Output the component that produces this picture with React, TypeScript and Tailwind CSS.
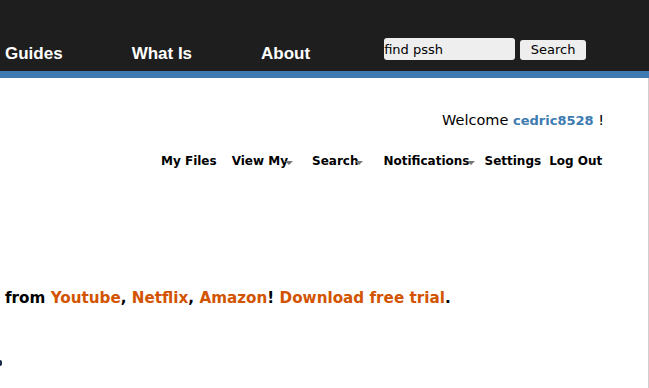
import React from 'react';

const navFont = { fontFamily: '"Liberation Sans", Arial, sans-serif' };
const bodyFont = { fontFamily: '"DejaVu Sans", Verdana, sans-serif' };

const Caret = () => (
  <span className="ml-[-3px] mt-[4px] inline-block h-0 w-0 border-x-[4px] border-t-[4px] border-x-transparent border-t-[#777]" />
);

const MenuItem: React.FC<{ label: string; caret?: boolean; className?: string }> = ({ label, caret, className }) => (
  <span className={`flex items-center text-[12px] font-bold text-black ${className ?? ''}`}>
    {label}
    {caret && <Caret />}
  </span>
);

export default function App() {
  return (
    <div className="h-[388px] w-[649px] overflow-hidden bg-white" style={bodyFont}>
      <header className="flex h-[71px] bg-[#1e1e1e]">
        <nav className="flex gap-[69px] self-end pb-[5px] pl-[5px] text-[17px] font-bold text-white" style={navFont}>
          <span>Guides</span>
          <span>What Is</span>
          <span>About</span>
        </nav>
        <div className="ml-[74px] mt-[38px] flex h-[22px] items-center gap-[5px]">
          <input
            readOnly
            value="find pssh"
            className="h-[22px] w-[131px] rounded-[3px] bg-[#eeeeee] px-0 text-[13px] text-black outline-none"
            style={bodyFont}
          />
          <button
            className="mt-[2px] h-[20px] w-[66px] rounded-[3px] bg-[#eeeeee] text-[13px] text-black"
            style={bodyFont}
          >
            Search
          </button>
        </div>
      </header>
      <div className="h-[7px] bg-[#3d7bb0]" />
      <main className="h-[310px] border-r border-[#cfcfcf]">
        <div className="flex justify-end pr-[44px] pt-[32px] text-[14.5px] text-black">
          <span>
            Welcome <span className="text-[13px] font-bold text-[#3d7bb0]">cedric8528</span> !
          </span>
        </div>
        <div className="mt-[20px] flex items-center pl-[161px]">
          <MenuItem label="My Files" />
          <MenuItem label="View My" caret className="ml-[15px]" />
          <MenuItem label="Search" caret className="ml-[19px]" />
          <MenuItem label="Notifications" caret className="ml-[20px]" />
          <MenuItem label="Settings" className="ml-[10px]" />
          <MenuItem label="Log Out" className="ml-[8px]" />
        </div>
        <p className="mt-[117px] pl-[5px] text-[15.2px] font-bold text-black">
          from <span className="text-[#d35400]">Youtube</span>, <span className="text-[#d35400]">Netflix</span>,{' '}
          <span className="text-[#d35400]">Amazon</span>! <span className="text-[#d35400]">Download free trial</span>.
        </p>
        <div className="mt-[50px] h-[6px] w-[2px] rounded-r-full bg-[#1a2a4a]" />
      </main>
    </div>
  );
}
